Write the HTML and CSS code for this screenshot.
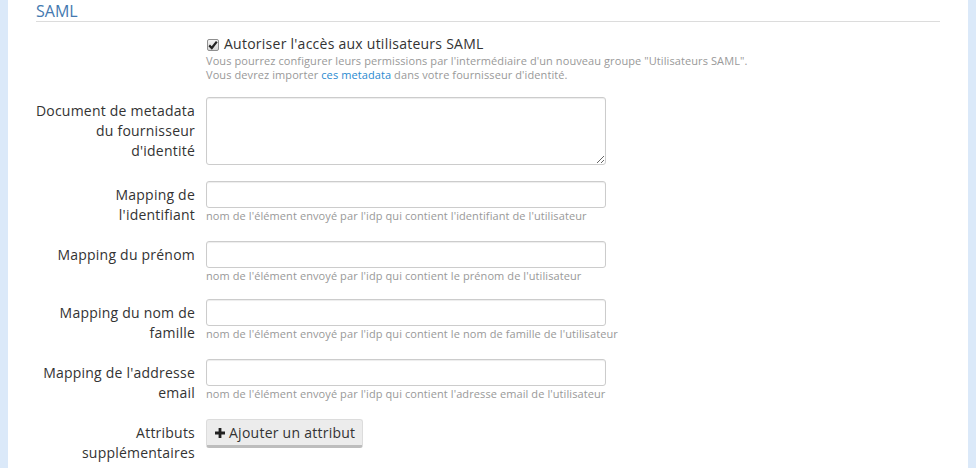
FILE: index.html
```html
<!DOCTYPE html>
<html lang="fr">
<head>
<meta charset="utf-8">
<title>SAML</title>
<link rel="stylesheet" href="styles.css">
</head>
<body>
<div class="page">
  <div class="panel">
    <div class="legend">SAML</div>

    <div class="form-row check-row">
      <div class="control-label"></div>
      <div class="controls">
        <label class="check">
          <span class="check-box"><svg width="10" height="10" viewBox="0 0 10 10"><path d="M1.2 5.4 L3.8 8 L8.8 1.6" fill="none" stroke="#222" stroke-width="2.2" stroke-linejoin="miter"/></svg></span>
          <span>Autoriser l'accès aux utilisateurs SAML</span>
        </label>
        <div class="help">Vous pourrez configurer leurs permissions par l'intermédiaire d'un nouveau groupe "Utilisateurs SAML".</div>
        <div class="help">Vous devrez importer <a href="#" class="link">ces metadata</a> dans votre fournisseur d'identité.</div>
      </div>
    </div>

    <div class="form-row">
      <label class="control-label">Document de metadata<br>du fournisseur<br>d'identité</label>
      <div class="controls"><textarea class="field area"></textarea></div>
    </div>

    <div class="form-row">
      <label class="control-label">Mapping de<br>l'identifiant</label>
      <div class="controls">
        <input class="field" type="text">
        <div class="help">nom de l'élément envoyé par l'idp qui contient l'identifiant de l'utilisateur</div>
      </div>
    </div>

    <div class="form-row">
      <label class="control-label">Mapping du prénom</label>
      <div class="controls">
        <input class="field" type="text">
        <div class="help">nom de l'élément envoyé par l'idp qui contient le prénom de l'utilisateur</div>
      </div>
    </div>

    <div class="form-row">
      <label class="control-label">Mapping du nom de<br>famille</label>
      <div class="controls">
        <input class="field" type="text">
        <div class="help">nom de l'élément envoyé par l'idp qui contient le nom de famille de l'utilisateur</div>
      </div>
    </div>

    <div class="form-row">
      <label class="control-label">Mapping de l'addresse<br>email</label>
      <div class="controls">
        <input class="field" type="text">
        <div class="help">nom de l'élément envoyé par l'idp qui contient l'adresse email de l'utilisateur</div>
      </div>
    </div>

    <div class="form-row">
      <label class="control-label">Attributs<br>supplémentaires</label>
      <div class="controls">
        <button class="btn" type="button"><svg class="plus" width="10" height="10" viewBox="0 0 10 10"><path d="M3.6 0 H6.4 V3.6 H10 V6.4 H6.4 V10 H3.6 V6.4 H0 V3.6 H3.6 Z" fill="#222"/></svg>Ajouter un attribut</button>
      </div>
    </div>
  </div>
</div>
</body>
</html>
```

FILE: styles.css
```css
html, body {
  margin: 0;
  padding: 0;
}

body {
  background: #dbe9f9;
  font-family: "Open Sans", "DejaVu Sans", sans-serif;
  font-size: 14px;
  color: #333;
}

.page {
  padding: 0 8px;
}

.panel {
  background: #fff;
  padding: 0 28px;
  min-height: 468px;
  overflow: hidden;
}

.legend {
  font-size: 16px;
  line-height: 20px;
  color: #4479b0;
  border-bottom: 1px solid #dcdcdc;
  padding-top: 1px;
  margin-bottom: 12px;
}

.form-row {
  display: grid;
  grid-template-columns: 186px 1fr;
  margin: 0 0 16px -16px;
}

.check-row {
  margin-bottom: 15px;
}

.control-label {
  text-align: right;
  padding: 4px 11px 0 0;
  line-height: 20px;
  letter-spacing: 0.22px;
  white-space: nowrap;
}

.check-row .control-label {
  padding: 0;
}

.controls {
  min-width: 0;
}

.check {
  display: flex;
  align-items: center;
  line-height: 20px;
  height: 20px;
  letter-spacing: 0.25px;
}

.check-box {
  box-sizing: border-box;
  width: 12px;
  height: 12px;
  border: 1px solid #8f8f8f;
  border-radius: 2px;
  background: linear-gradient(#f4f4f4, #d8d8d8);
  display: flex;
  align-items: center;
  justify-content: center;
  margin: 1px 5px 0 1px;
}

.help {
  font-size: 11px;
  line-height: 14px;
  color: #999;
  letter-spacing: 0.09px;
}

.link {
  color: #2a8ad0;
  text-decoration: none;
}

.field {
  display: block;
  box-sizing: border-box;
  width: 400px;
  height: 27px;
  margin: 0 0 1px 0;
  padding: 3px 6px;
  border: 1px solid #ccc;
  border-radius: 3px;
  box-shadow: inset 0 1px 1px rgba(0, 0, 0, 0.075);
  font-family: inherit;
  font-size: 13px;
  background: #fff;
}

.area {
  height: 68px;
  margin: 0;
  resize: vertical;
}

.btn {
  display: inline-flex;
  align-items: center;
  box-sizing: border-box;
  height: 29px;
  padding: 0 7px 0 8px;
  border: 1px solid #dcdcdc;
  border-bottom: 3px solid #bdbdbd;
  border-radius: 3px;
  background: #ececec;
  font-family: inherit;
  font-size: 14px;
  color: #333;
  line-height: 20px;
  letter-spacing: 0.25px;
}

.plus {
  margin-right: 4px;
}
```
